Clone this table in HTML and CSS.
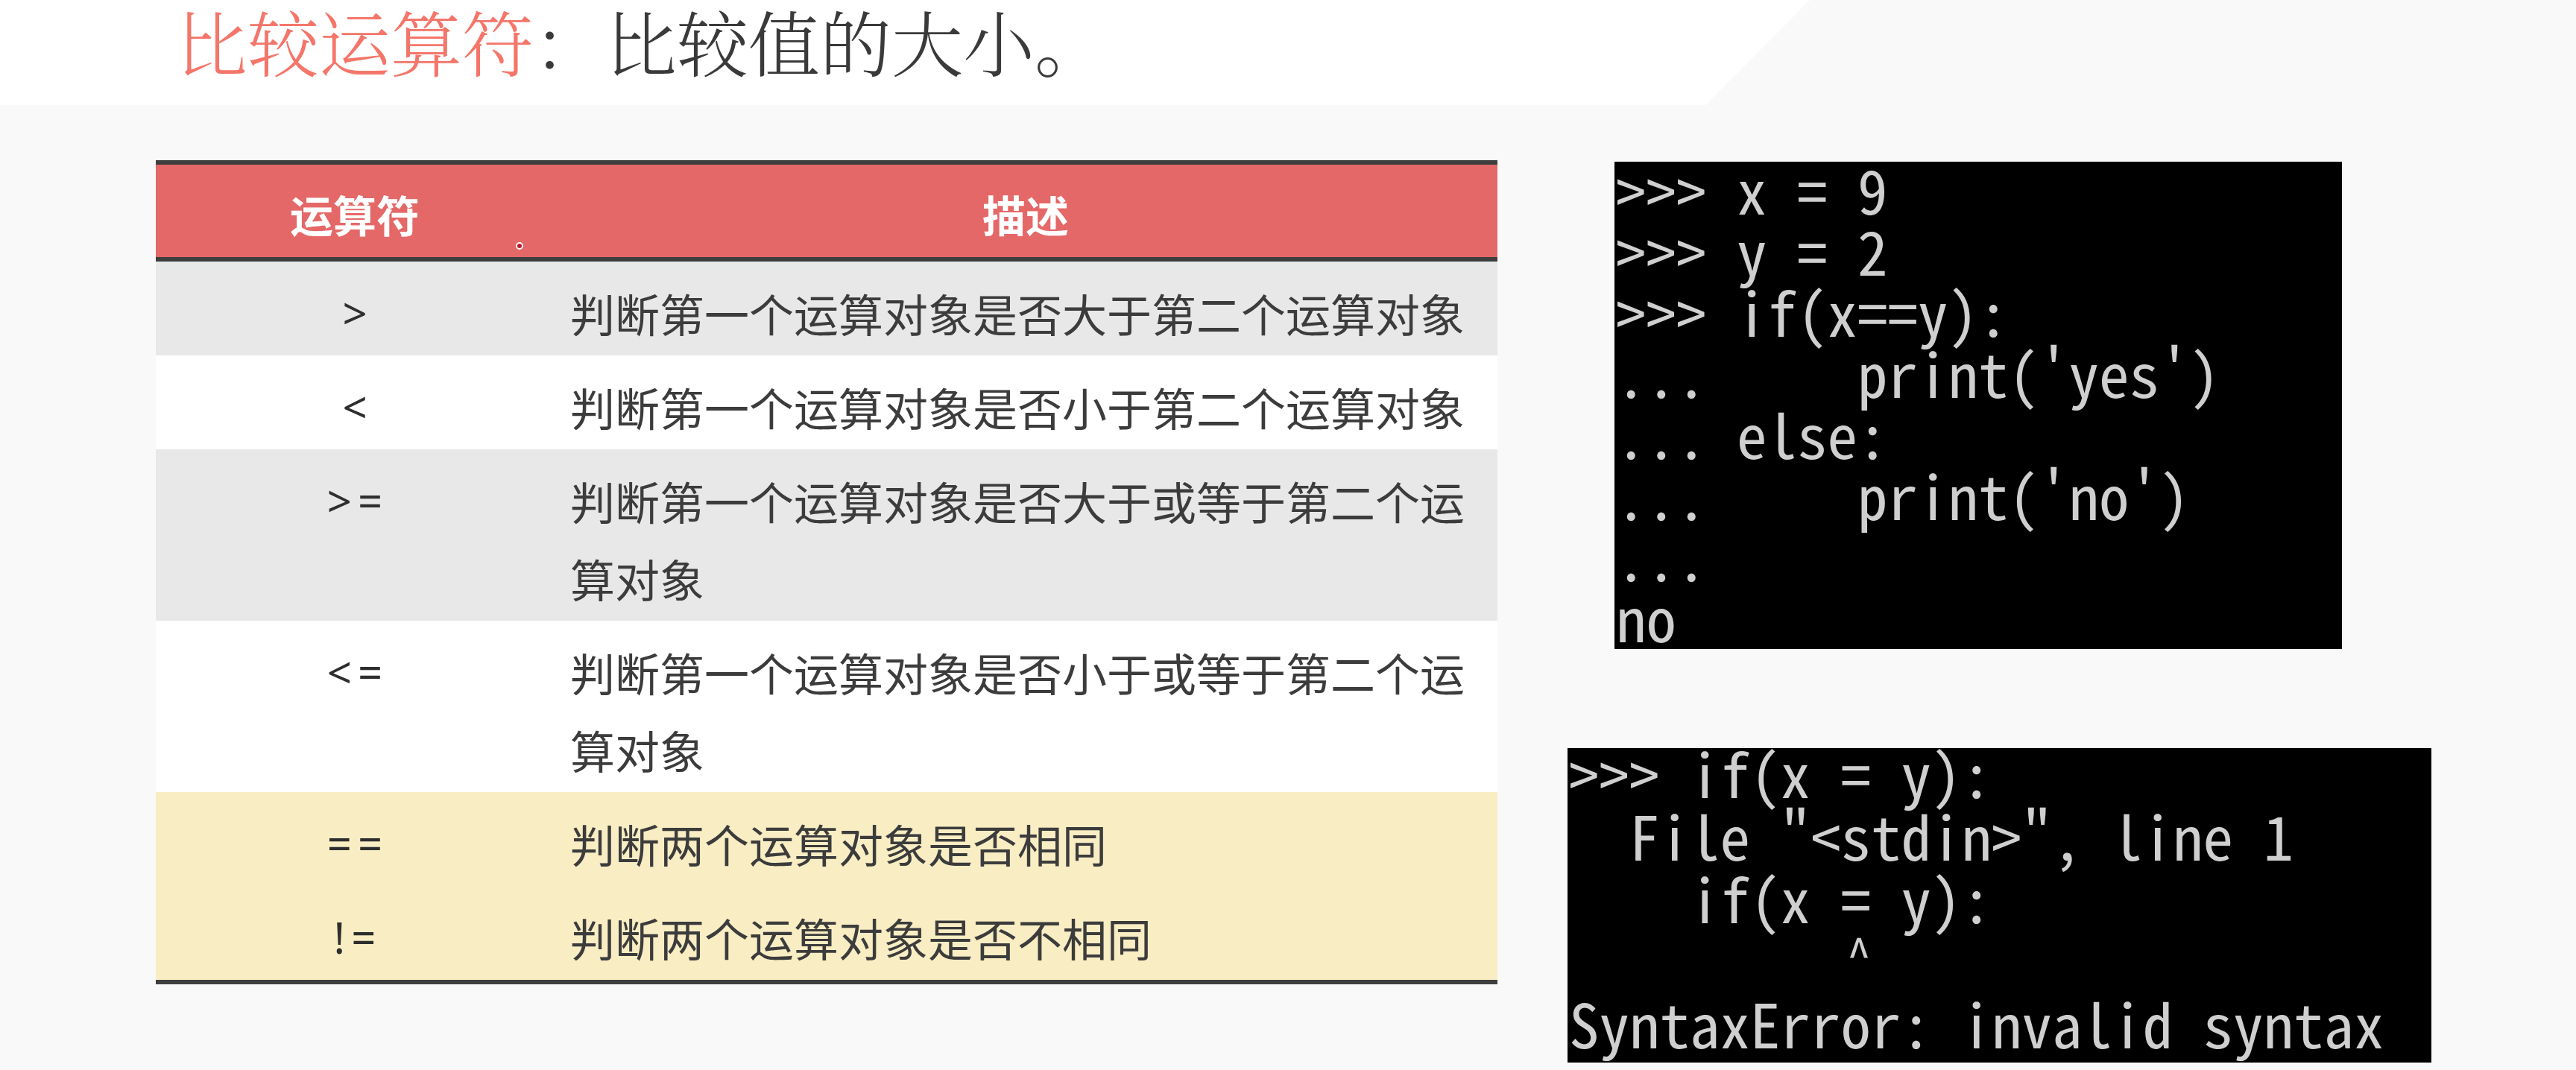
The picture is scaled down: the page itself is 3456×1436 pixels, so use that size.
FILE: index.html
```html
<!DOCTYPE html>
<html lang="zh-CN">
<head>
    <meta charset="UTF-8">
    <meta name="viewport" content="width=device-width, initial-scale=1.0">
    <title>比较运算符</title>
    <link rel="stylesheet" href="styles.css">
</head>
<body>
    <header class="slide-title">
        <h1><span class="accent">比较运算符</span>：比较值的大小。</h1>
    </header>

    <main class="slide-body">
        <!-- operator table -->
        <table class="op-table">
            <thead>
                <tr>
                    <th class="col-op">运算符<span class="cursor-mark"></span></th>
                    <th class="col-desc">描述</th>
                </tr>
            </thead>
            <tbody>
                <tr class="row-gray">
                    <td class="op">&gt;</td>
                    <td>判断第一个运算对象是否大于第二个运算对象</td>
                </tr>
                <tr class="row-white">
                    <td class="op">&lt;</td>
                    <td>判断第一个运算对象是否小于第二个运算对象</td>
                </tr>
                <tr class="row-gray">
                    <td class="op">&gt;=</td>
                    <td>判断第一个运算对象是否大于或等于第二个运算对象</td>
                </tr>
                <tr class="row-white">
                    <td class="op">&lt;=</td>
                    <td>判断第一个运算对象是否小于或等于第二个运算对象</td>
                </tr>
                <tr class="row-yellow">
                    <td class="op">==</td>
                    <td>判断两个运算对象是否相同</td>
                </tr>
                <tr class="row-yellow">
                    <td class="op">!=</td>
                    <td>判断两个运算对象是否不相同</td>
                </tr>
            </tbody>
        </table>

        <!-- interpreter screenshots -->
        <div class="consoles">
<pre class="console console-ok"><code class="console-text">&gt;&gt;&gt; x = 9
&gt;&gt;&gt; y = 2
&gt;&gt;&gt; if(x==y):
...     print('yes')
... else:
...     print('no')
...
no</code></pre>
<pre class="console console-err"><code class="console-text">&gt;&gt;&gt; if(x = y):
  File "&lt;stdin&gt;", line 1
    if(x = y):
         <span class="caret">^</span>
SyntaxError: invalid syntax</code></pre>
        </div>
    </main>
</body>
</html>
```

FILE: styles.css
```css
body {
    margin: 0;
    padding: 0;
    background-color: #f9f9f9;
    font-family: "Noto Sans CJK SC", "Noto Sans", sans-serif;
    color: #3c3c3c;
}

/* white title band with the slanted right edge */
.slide-title {
    position: relative;
    height: 141px;
    padding-left: 236px;
}

.slide-title::before {
    content: "";
    position: absolute;
    top: 0;
    left: 0;
    right: 0;
    bottom: 0;
    background-color: #fff;
    clip-path: polygon(0 0, 2428px 0, 2288px 100%, 0 100%);
}

.slide-title h1 {
    position: relative;
    margin: 0;
    font-family: "Noto Serif CJK SC", "Noto Sans CJK SC", serif;
    font-weight: 300;
    font-size: 96px;
    line-height: 107px;
    color: #3a3a3a;
}

.accent {
    color: #f4766a;
}

.slide-body {
    display: flex;
    align-items: flex-start;
    padding: 74px 0 0 209px;
}

.op-table {
    width: 1800px;
    table-layout: fixed;
    border-collapse: separate;
    border-spacing: 0;
    font-size: 60px;
}

.op-table th {
    background-color: #e56868;
    color: #fff;
    font-weight: bold;
    font-size: 58px;
    line-height: 100px;
    padding: 16px 0 8px;
    border-top: 6px solid #3e3e3e;
    border-bottom: 6px solid #3e3e3e;
    text-align: center;
}

.col-op {
    width: 534px;
    position: relative;
}

.cursor-mark {
    position: absolute;
    left: 483px;
    top: 104px;
    width: 6px;
    height: 6px;
    background-color: #c0152a;
    border: 2px solid #fff;
    border-radius: 50%;
}

.op-table td {
    line-height: 104px;
    padding: 17px 24px 5px 22px;
    vertical-align: top;
    color: #3c3c3c;
}

.op-table td.op {
    text-align: center;
    font-family: "Noto Sans", sans-serif;
    font-size: 58px;
    letter-spacing: 8px;
    padding-left: 8px;
    padding-right: 0;
    color: #2e2e2e;
}

.op-table tbody tr:last-child td {
    border-bottom: 6px solid #3e3e3e;
}

.row-gray {
    background-color: #e8e8e8;
}

.row-white {
    background-color: #fff;
}

.row-yellow {
    background-color: #f9edc3;
}

.consoles {
    display: flex;
    flex-direction: column;
    margin-left: 94px;
    margin-top: 2px;
}

.console {
    margin: 0;
    padding: 0 0 0 2px;
    background-color: #000;
    color: #cfcfcf;
    font-family: "Noto Sans Mono CJK SC", "Liberation Mono", monospace;
    font-size: 81px;
    overflow: hidden;
}

.console-text {
    display: block;
    font-family: inherit;
}

.console-ok {
    width: 974px;
    height: 654px;
    margin-left: 63px;
    line-height: 82px;
}

.console-ok .console-text {
    margin-top: -5px;
}

.console-err {
    width: 1157px;
    height: 422px;
    margin-top: 133px;
    line-height: 84px;
}

.console-err .console-text {
    margin-top: -10px;
}

.caret {
    font-size: 62px;
    line-height: 0;
    vertical-align: 18px;
    padding-left: 9px;
}
```
